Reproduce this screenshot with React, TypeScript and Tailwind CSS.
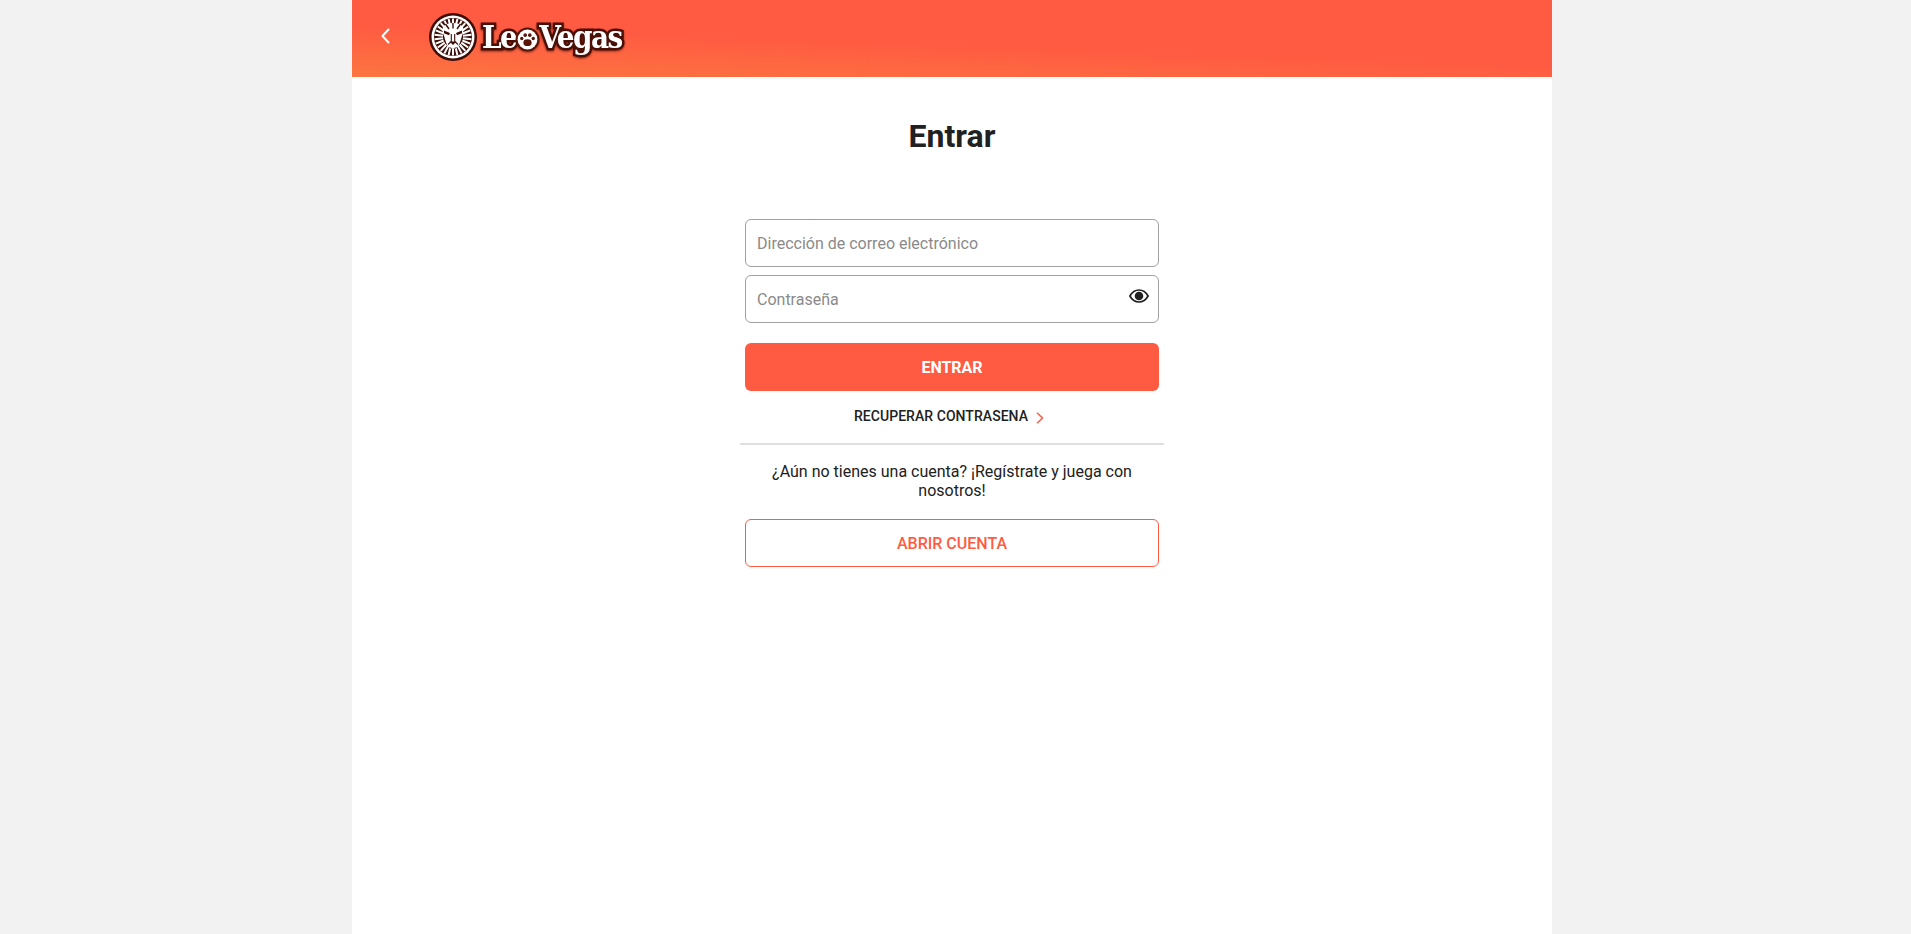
const RAYS = Array.from({ length: 26 }, (_, i) => (i * 360) / 26);

function LionBadge() {
  return (
    <svg width="48" height="48" viewBox="0 0 48 48" className="shrink-0">
      <circle cx="24" cy="24" r="24" fill="#3d0d08" />
      <circle cx="24" cy="24" r="21.5" fill="#fff" />
      <circle cx="24" cy="24" r="19" fill="#3d0d08" />
      {RAYS.map((a) => (
        <line key={a} x1="24" y1="5.5" x2="24" y2="14" stroke="#fff" strokeWidth="2" transform={`rotate(${a} 24 24)`} />
      ))}
      <path d="M24 10c-4.500 0-8 1.500-10 4-1 3 0 6 1 8.500 1 4 2 7.500 3.500 10 2 2.500 3.500 3.500 5.500 3.500s3.500-1 5.500-3.500c1.500-2.500 2.500-6 3.500-10 1-2.500 2-5.500 1-8.500-2-2.500-5.500-4-10-4z" fill="#fff" />
      <path d="M15 17.500l6 2.500-1 2.200-5-2zM33 17.500l-6 2.500 1 2.200 5-2z" fill="#3d0d08" />
      <path d="M22.300 21v7.500l-3.300 3M25.700 21v7.500l3.300 3" fill="none" stroke="#3d0d08" strokeWidth="1.100" />
      <path d="M20.500 28.500h7l-3.500 3.500z" fill="#3d0d08" />
      <path d="M20 34l4 1.500 4-1.500-1 1.500h-6z" fill="#3d0d08" />
      <path d="M16.500 11l3.500 5M24 10v5.500M31.500 11l-3.500 5" stroke="#3d0d08" strokeWidth="1.400" />
    </svg>
  );
}

function PawO() {
  return (
    <svg width="25" height="25" viewBox="0 0 24 24" className="-mx-[1px] mt-[11px] shrink-0">
      <circle cx="12" cy="12" r="11.500" fill="#5a1408" />
      <circle cx="12" cy="12" r="9.500" fill="#fff" />
      <ellipse cx="12" cy="15" rx="4" ry="3.300" fill="#5a1408" />
      <circle cx="6.500" cy="11" r="1.600" fill="#5a1408" />
      <circle cx="9.800" cy="7.800" r="1.700" fill="#5a1408" />
      <circle cx="14.200" cy="7.800" r="1.700" fill="#5a1408" />
      <circle cx="17.500" cy="11" r="1.600" fill="#5a1408" />
    </svg>
  );
}

export default function App() {
  return (
    <div className="flex min-h-[934px] justify-center bg-[#f2f2f2] font-['Roboto',sans-serif]">
      <div className="mr-[7px] flex w-[1200px] flex-col bg-white">
        <header className="flex h-[77px] items-start bg-[linear-gradient(182deg,#ff5b42_56%,#fb7640_102%)] pl-[24px] pt-[13px]">
          <svg width="20" height="20" viewBox="0 0 20 20" className="mt-[13px] shrink-0" fill="none" stroke="#fff" strokeWidth="2" strokeLinecap="round" strokeLinejoin="round">
            <path d="M12.500 3.500 6.500 10l6 6.500" />
          </svg>
          <div className="ml-[33px] flex items-center">
            <LionBadge />
            <div className="ml-[5px] flex items-start font-['DejaVu_Serif',serif] text-[31px] leading-[42px] font-bold tracking-[-1.5px] text-white [font-stretch:condensed] [-webkit-text-stroke:5px_#4a1008] [paint-order:stroke_fill] [filter:drop-shadow(0_1px_1px_#8a2d1a)]">
              <span>Le</span>
              <PawO />
              <span>Vegas</span>
            </div>
          </div>
        </header>

        <main className="flex flex-col items-center">
          <h1 className="mt-[35px] text-[32px] leading-[48px] font-bold text-[#212121]">Entrar</h1>

          <div className="mt-[59px] flex w-[424px] flex-col">
            <div className="flex flex-col gap-2 px-[5px]">
              <input
                placeholder="Dirección de correo electrónico"
                className="h-[48px] w-full rounded-[6px] border border-[#a0a0a0] px-[11px] text-base text-[#212121] outline-none placeholder:text-[#8a8a8a]"
              />
              <div className="relative">
                <input
                  placeholder="Contraseña"
                  className="h-[48px] w-full rounded-[6px] border border-[#a0a0a0] px-[11px] pr-10 text-base text-[#212121] outline-none placeholder:text-[#8a8a8a]"
                />
                <svg width="20" height="14" viewBox="0 0 20 14" className="absolute top-[14px] right-[10px]">
                  <path d="M.9 7C3 3.200 6.200 1 10 1s7 2.200 9.100 6c-2.100 3.800-5.300 6-9.100 6S3 10.800.9 7z" fill="#fff" stroke="#212121" strokeWidth="1.700" />
                  <circle cx="10" cy="7" r="4.300" fill="#212121" />
                </svg>
              </div>
              <button className="mt-3 h-[48px] rounded-[6px] bg-[#ff5b42] pt-[1px] text-base font-bold text-white">ENTRAR</button>
            </div>

            <a className="mt-[15px] flex h-[20px] items-center justify-center pr-[6px] text-sm font-medium tracking-[0.05px] text-[#212121]">
              RECUPERAR CONTRASENA
              <svg width="8" height="12" viewBox="0 0 8 12" fill="none" stroke="#ff5b42" strokeWidth="1.500" className="mt-[3px] ml-2">
                <path d="M1 .8 6.500 6 1 11.200" />
              </svg>
            </a>

            <div className="mt-[17px] h-[2px] bg-[#e0e0e0]" />

            <p className="mt-[17px] px-[20px] text-center text-base leading-[19px] text-[#212121]">
              ¿Aún no tienes una cuenta? ¡Regístrate y juega con nosotros!
            </p>

            <div className="mt-[19px] px-[5px]">
              <button className="h-[48px] w-full rounded-[6px] border border-[#ff5b42] pt-[1px] text-base font-medium text-[#ff5b42]">ABRIR CUENTA</button>
            </div>
          </div>
        </main>
      </div>
    </div>
  );
}
